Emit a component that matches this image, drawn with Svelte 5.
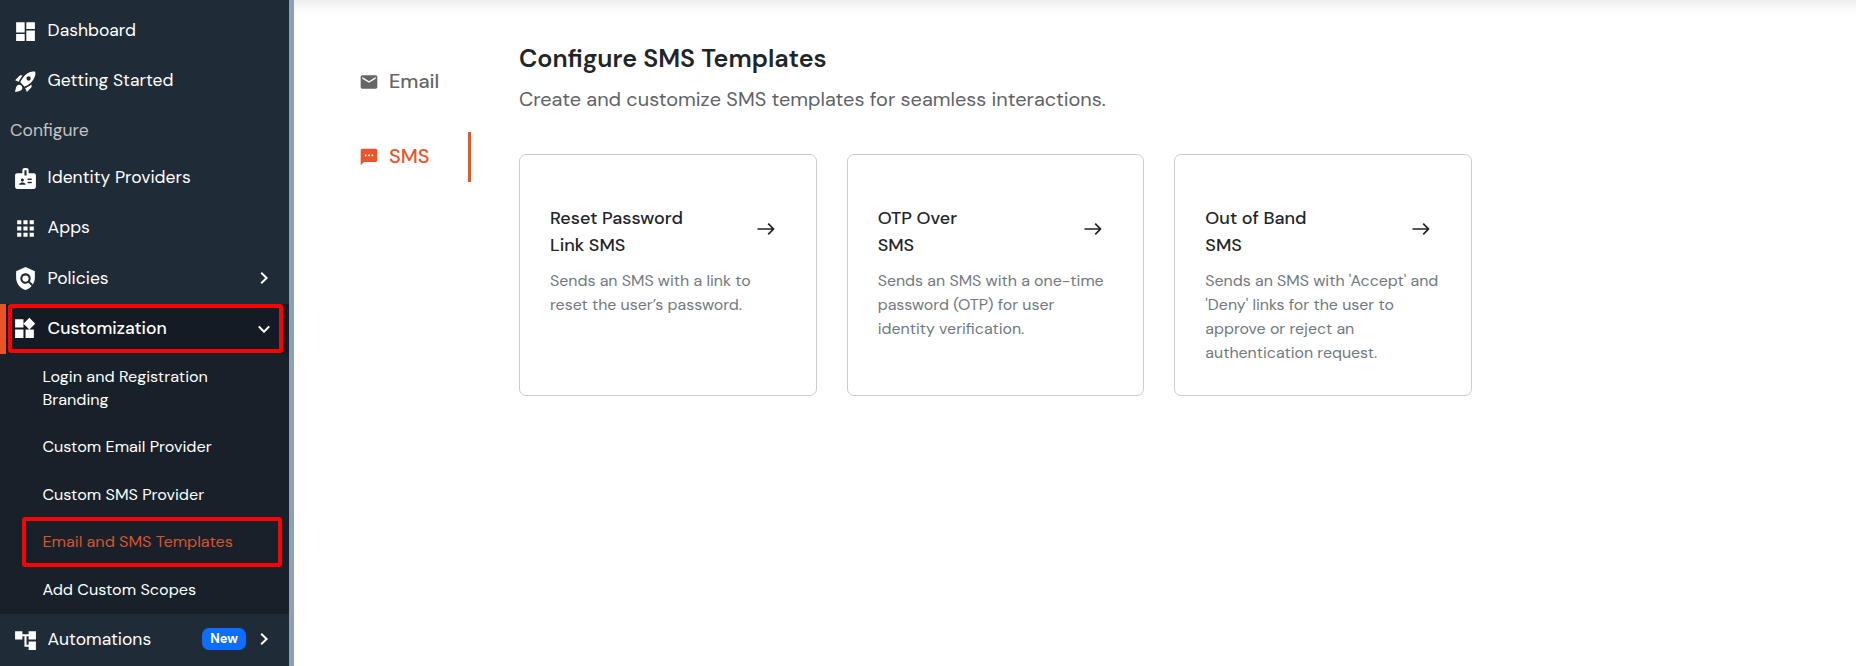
<script lang="ts">
  interface NavItem {
    label: string;
    icon: string;
    chevron?: boolean;
    badge?: string;
  }

  interface Template {
    title: string[];
    text: string[];
  }

  const icons: Record<string, string> = {
    dashboard: 'M3 13h8.2V3H3v10zm0 8h8.2v-6.5H3V21zm9.8 0H21V11h-8.2v10zm0-18v6.5H21V3h-8.2z',
    rocket:
      'M9.19 6.35c-2.04 2.29-3.44 5.58-3.57 5.89L2 10.69l4.05-4.05c.47-.47 1.15-.68 1.81-.55l1.33.26zM11.17 17s3.74-1.55 5.89-3.7c5.4-5.4 4.5-9.62 4.21-10.57-.95-.3-5.17-1.19-10.57 4.21C8.55 9.09 7 12.83 7 12.83L11.17 17zm6.48-2.19c-2.29 2.04-5.58 3.44-5.89 3.57L13.31 22l4.05-4.05c.47-.47.68-1.15.55-1.81l-.26-1.33zM9 18c0 .83-.34 1.58-.88 2.12C6.94 21.3 2 22 2 22s.7-4.94 1.88-6.12C4.42 15.34 5.17 15 6 15c1.66 0 3 1.34 3 3zm4-9c0-1.1.9-2 2-2s2 .9 2 2-.9 2-2 2-2-.9-2-2z',
    badge:
      'M20 7h-5V4c0-1.1-.9-2-2-2h-2c-1.1 0-2 .9-2 2v3H4c-1.1 0-2 .9-2 2v11c0 1.1.9 2 2 2h16c1.1 0 2-.9 2-2V9c0-1.1-.9-2-2-2zM9 12c.83 0 1.5.67 1.5 1.5S9.83 15 9 15s-1.5-.67-1.5-1.5S8.17 12 9 12zm3 6H6v-.75c0-1 2-1.5 3-1.5s3 .5 3 1.5V18zm1-9h-2V4h2v5zm5 7.5h-4V15h4v1.5zm0-3h-4V12h4v1.5z',
    apps: 'M4 8h4V4H4v4zm6 12h4v-4h-4v4zm-6 0h4v-4H4v4zm0-6h4v-4H4v4zm6 0h4v-4h-4v4zm6-10v4h4V4h-4zm-6 4h4V4h-4v4zm6 6h4v-4h-4v4zm0 6h4v-4h-4v4z',
    policy:
      'M21 5l-9-4-9 4v6c0 5.55 3.84 10.74 9 12 2.3-.56 4.33-1.9 5.88-3.71l-3.12-3.12c-1.94 1.29-4.58 1.07-6.29-.64-1.95-1.95-1.95-5.12 0-7.07 1.95-1.95 5.12-1.95 7.07 0 1.71 1.71 1.92 4.35.64 6.29l2.9 2.9C20.29 15.69 21 13.38 21 11V5zM12 9a3 3 0 1 0 0 6a3 3 0 1 0 0-6z',
    widgets: 'M13 13v8h8v-8h-8zM3 21h8v-8H3v8zM3 3v8h8V3H3zm13.66-1.31L11 7.34 16.66 13l5.66-5.66-5.66-5.65z',
    tree: 'M22 11V3h-7v3H9V3H2v8h7V8h2v10h4v3h7v-8h-7v3h-2V8h2v3z',
    mail: 'M20 4H4c-1.1 0-1.99.9-1.99 2L2 18c0 1.1.9 2 2 2h16c1.1 0 2-.9 2-2V6c0-1.1-.9-2-2-2zm0 4l-8 5-8-5V6l8 5 8-5v2z',
    sms: 'M20 2H4c-1.1 0-1.99.9-1.99 2L2 22l4-4h14c1.1 0 2-.9 2-2V4c0-1.1-.9-2-2-2zM9 11H7V9h2v2zm4 0h-2V9h2v2zm4 0h-2V9h2v2z'
  };

  const topItems: NavItem[] = [
    { label: 'Dashboard', icon: 'dashboard' },
    { label: 'Getting Started', icon: 'rocket' }
  ];

  const configureItems: NavItem[] = [
    { label: 'Identity Providers', icon: 'badge' },
    { label: 'Apps', icon: 'apps' },
    { label: 'Policies', icon: 'policy', chevron: true }
  ];

  const automations: NavItem = { label: 'Automations', icon: 'tree', chevron: true, badge: 'New' };

  const subItems = [
    'Login and Registration Branding',
    'Custom Email Provider',
    'Custom SMS Provider',
    'Email and SMS Templates',
    'Add Custom Scopes'
  ];

  const tabs = [
    { label: 'Email', icon: 'mail' },
    { label: 'SMS', icon: 'sms' }
  ];

  const templates: Template[] = [
    {
      title: ['Reset Password', 'Link SMS'],
      text: ['Sends an SMS with a link to', 'reset the user’s password.']
    },
    {
      title: ['OTP Over', 'SMS'],
      text: ['Sends an SMS with a one-time', 'password (OTP) for user', 'identity verification.']
    },
    {
      title: ['Out of Band', 'SMS'],
      text: ["Sends an SMS with 'Accept' and", "'Deny' links for the user to", 'approve or reject an', 'authentication request.']
    }
  ];

  let activeSub = $state('Email and SMS Templates');
  let activeTab = $state('SMS');
</script>

{#snippet icon(name: string)}
  <svg class="icon" viewBox="0 0 24 24" aria-hidden="true"><path d={icons[name]} /></svg>
{/snippet}

{#snippet navRow(item: NavItem)}
  <a class="nav-row" href="#top">
    {@render icon(item.icon)}
    <span class="nav-label">{item.label}</span>
    {#if item.badge}
      <span class="new-badge">{item.badge}</span>
    {/if}
    {#if item.chevron}
      <svg class="chevron" viewBox="0 0 14 14" aria-hidden="true"><path d="M4.2 1.8 9.6 7l-5.4 5.2" /></svg>
    {/if}
  </a>
{/snippet}

<div class="layout">
  <nav class="sidebar">
    {#each topItems as item}
      {@render navRow(item)}
    {/each}

    <div class="section">Configure</div>

    <div class="group">
      {#each configureItems as item}
        {@render navRow(item)}
      {/each}
    </div>

    <a class="nav-row current" href="#top">
      {@render icon('widgets')}
      <span class="nav-label">Customization</span>
      <svg class="chevron" viewBox="0 0 14 14" aria-hidden="true"><path d="M1.8 4.4 7 9.8l5.2-5.4" /></svg>
      <span class="marker marker-row"></span>
    </a>

    <div class="submenu">
      {#each subItems as sub}
        <button class="sub-item" class:active={sub === activeSub} onclick={() => (activeSub = sub)}>
          <span>{sub}</span>
          {#if sub === activeSub}
            <span class="marker marker-sub"></span>
          {/if}
        </button>
      {/each}
    </div>

    {@render navRow(automations)}
  </nav>

  <main class="main">
    <div class="tabs">
      {#each tabs as tab}
        <button class="tab" class:active={tab.label === activeTab} onclick={() => (activeTab = tab.label)}>
          {@render icon(tab.icon)}
          <span>{tab.label}</span>
        </button>
      {/each}
    </div>

    <section class="content">
      <h1>Configure SMS Templates</h1>
      <p class="subtitle">Create and customize SMS templates for seamless interactions.</p>

      <div class="cards">
        {#each templates as tpl}
          <article class="card">
            <div class="card-head">
              <h2>
                {#each tpl.title as line}<span>{line}</span>{/each}
              </h2>
              <svg class="arrow" viewBox="0 0 18 14" aria-hidden="true">
                <path d="M.5 7H16.5M11.2 1.7 16.5 7l-5.3 5.3" />
              </svg>
            </div>
            <p>
              {#each tpl.text as line}<span>{line}</span>{/each}
            </p>
          </article>
        {/each}
      </div>
    </section>
  </main>
</div>

<style>
  :global(body) {
    background: #fff;
    overflow: hidden;
  }

  .layout {
    display: flex;
    height: 666px;
    font-family: 'DM Sans', Inter, 'Open Sans', sans-serif;
    color: #212529;
  }

  button {
    font: inherit;
    border: 0;
    background: none;
    text-align: left;
    cursor: pointer;
  }

  .icon {
    fill: currentColor;
    flex-shrink: 0;
  }

  /* ---- Sidebar ---- */
  .sidebar {
    box-sizing: border-box;
    width: 294px;
    flex-shrink: 0;
    padding-top: 5px;
    background: #1f2b36;
    border-right: 5px solid #8ca1b4;
    color: #fff;
  }

  .nav-row {
    position: relative;
    box-sizing: border-box;
    display: flex;
    align-items: center;
    height: 50px;
    padding: 0 18.5px 0 13px;
    color: #fff;
    font-size: 17.5px;
    text-decoration: none;
  }

  .nav-row .icon {
    width: 25px;
    height: 25px;
    margin-top: 2px;
  }

  .nav-label {
    flex: 1;
    margin-left: 9.6px;
  }

  .section {
    height: 47px;
    padding-left: 10px;
    font-size: 17.5px;
    line-height: 50px;
    color: #c4c4c4;
  }

  .group {
    height: 152px;
  }

  .group .nav-row {
    height: 50.3px;
  }

  .chevron {
    width: 14px;
    height: 14px;
    fill: none;
    stroke: #fff;
    stroke-width: 2;
  }

  .nav-row.current {
    padding-left: 6px;
    border-left: 6px solid #eb5424;
    background: #141b24;
    font-weight: 500;
  }

  .current .icon {
    margin-top: -1px;
  }

  .current .nav-label {
    margin-left: 10.6px;
    margin-top: -2px;
  }

  .new-badge {
    margin-right: 10.5px;
    padding: 0 8px;
    border-radius: 7px;
    background: #0d6efd;
    font-size: 13px;
    font-weight: 700;
    line-height: 22px;
  }

  .submenu {
    box-sizing: border-box;
    height: 260px;
    background: #18212a;
  }

  .sub-item {
    position: relative;
    box-sizing: border-box;
    display: block;
    width: 100%;
    padding: 12.2px 60px 12.2px 42.4px;
    color: #fff;
    font-size: 16.2px;
    line-height: 23.2px;
  }

  .sub-item:first-child {
    padding-top: 11px;
    padding-bottom: 11.6px;
  }

  .sub-item.active {
    padding: 11.7px 30px 12.7px 42.4px;
    color: #d9532f;
  }

  /* red frames laid over the highlighted entries */
  .marker {
    position: absolute;
    border: 4px solid #fb0204;
    border-radius: 3px;
    pointer-events: none;
  }

  .marker-row {
    inset: 0 6px 1px 2px;
  }

  .marker-sub {
    inset: -1.5px 7px -1px 22px;
  }

  /* ---- Main ---- */
  .main {
    flex: 1;
    display: flex;
    padding: 0 0 0 65px;
    background: linear-gradient(#efefef, #fafafa 9px, #fff 18px);
  }

  .tabs {
    display: flex;
    flex-direction: column;
    gap: 25px;
    width: 112px;
    padding-top: 57px;
  }

  .tab {
    box-sizing: border-box;
    display: flex;
    align-items: center;
    gap: 9.9px;
    height: 50px;
    padding: 0;
    border-right: 3px solid transparent;
    color: #666;
    font-size: 20px;
    font-weight: 500;
  }

  .tab .icon {
    width: 20px;
    height: 20px;
  }

  .tab span {
    margin-top: -2px;
  }

  .tab.active {
    border-color: #dc5a30;
    color: #e8552a;
  }

  .content {
    margin-left: 48px;
    padding-top: 43px;
  }

  h1 {
    margin: 0;
    font-size: 25.1px;
    font-weight: 600;
    line-height: 32px;
  }

  .subtitle {
    margin: 9px 0 0;
    font-size: 19.93px;
    line-height: 30px;
    color: #5f6368;
  }

  .cards {
    display: grid;
    grid-template-columns: repeat(3, 1fr);
    column-gap: 30px;
    width: 953px;
    margin-top: 40px;
  }

  .card {
    box-sizing: border-box;
    height: 242px;
    padding: 50px 30px 0;
    border: 1px solid #ccc;
    border-radius: 7px;
    background: #fff;
  }

  .card-head {
    display: flex;
    justify-content: space-between;
    padding-right: 11px;
  }

  .card span {
    display: block;
    white-space: nowrap;
  }

  h2 {
    margin: 0;
    font-size: 18px;
    font-weight: 500;
    line-height: 27px;
  }

  .arrow {
    width: 18px;
    height: 14px;
    margin-top: 17px;
    fill: none;
    stroke: #222;
    stroke-width: 1.7;
  }

  .card p {
    margin: 10px 0 0;
    font-size: 15.95px;
    line-height: 24px;
    color: #717980;
  }
</style>
